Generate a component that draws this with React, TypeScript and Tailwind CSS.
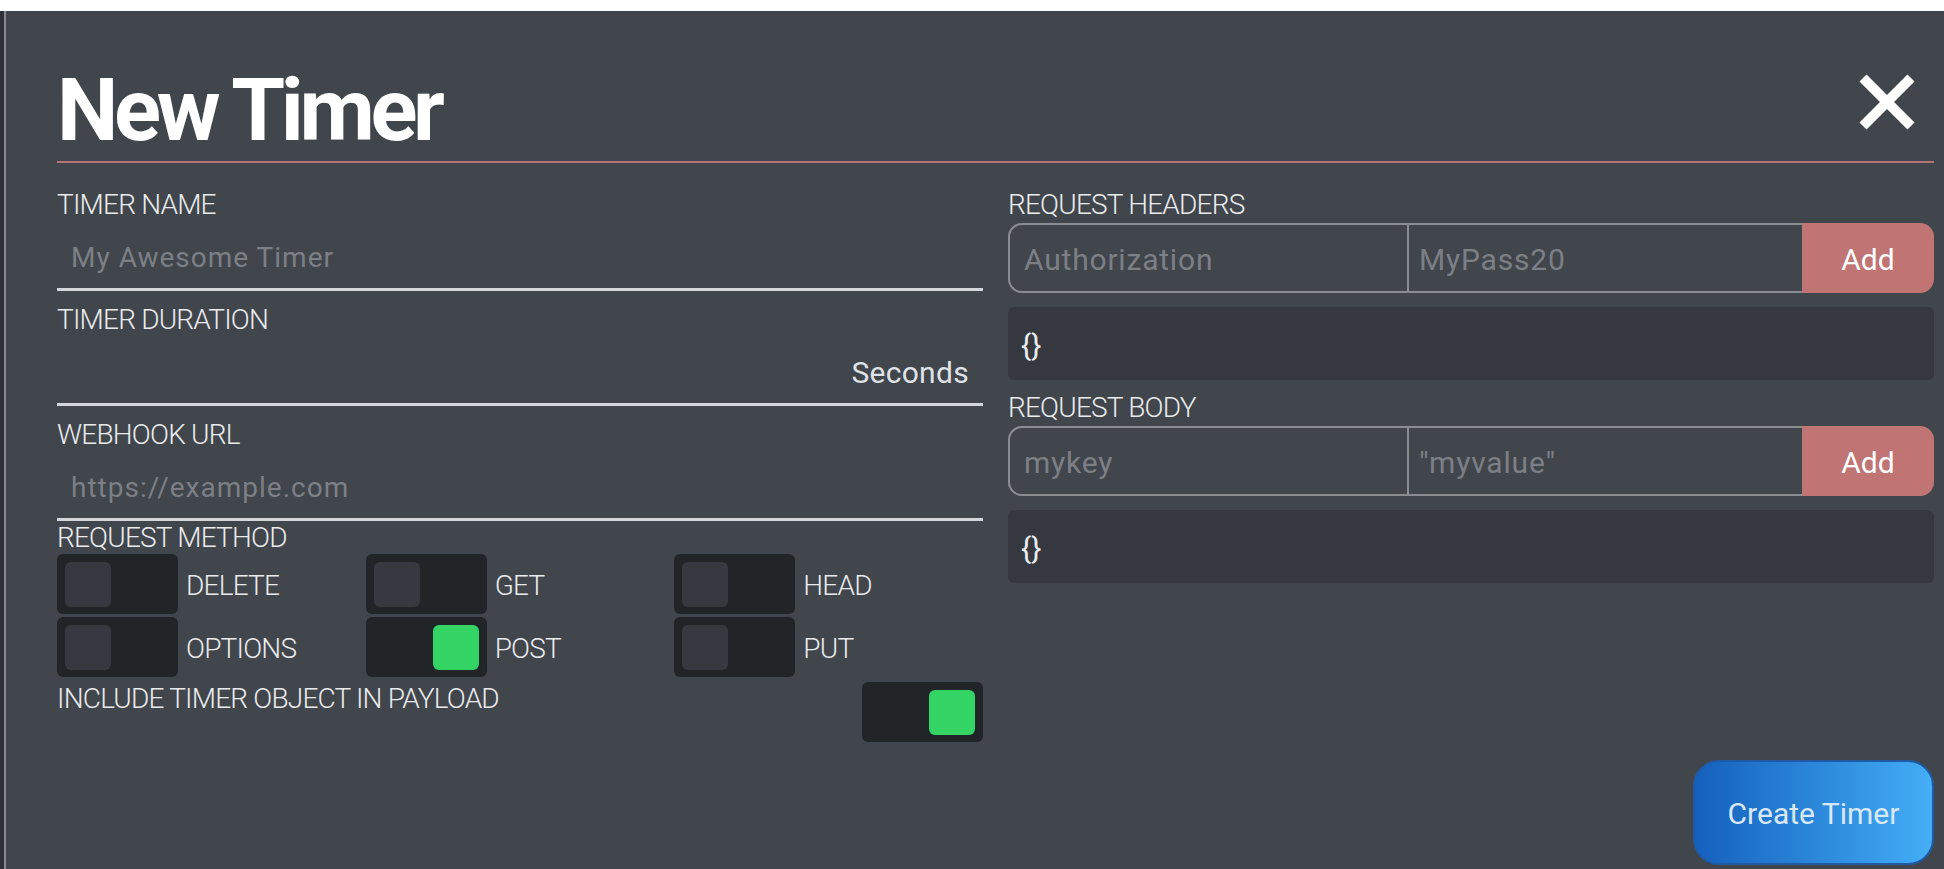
import React from "react";

const font = { fontFamily: "Roboto, 'Noto Sans', sans-serif" };

function Label({ children }: { children: React.ReactNode }) {
  return (
    <div className="text-[28px] leading-[32px] font-light tracking-[-0.8px] text-[#e9ebed] uppercase whitespace-nowrap">
      {children}
    </div>
  );
}

function LineInput({ placeholder, suffix }: { placeholder?: string; suffix?: string }) {
  return (
    <div className="flex items-center border-b-[3px] border-[#d3d6da] pt-[21px] pb-[14px] pl-[14px] pr-[14px]">
      <input
        placeholder={placeholder}
        className="flex-1 min-w-0 h-[32px] bg-transparent outline-none text-[28px] leading-[32px] text-white placeholder:text-[#7c8086] tracking-[1px]"
        style={font}
      />
      {suffix && <span className="text-[30px] leading-[32px] text-[#dfe2e6] tracking-[0.3px]">{suffix}</span>}
    </div>
  );
}

function Toggle({ on }: { on?: boolean }) {
  return (
    <div className={`w-[121px] h-[60px] rounded-[6px] bg-[#222528] flex items-center px-[8px] shrink-0 ${on ? "justify-end" : "justify-start"}`}>
      <div className={`w-[46px] h-[45px] rounded-[6px] ${on ? "bg-[#33d463]" : "bg-[#363a40]"}`} />
    </div>
  );
}

function Method({ name, on }: { name: string; on?: boolean }) {
  return (
    <div className="flex items-center gap-[8px]">
      <Toggle on={on} />
      <span className="text-[28px] leading-[32px] font-light tracking-[-0.8px] text-[#e9ebed] mt-[4px]">{name}</span>
    </div>
  );
}

function GroupInput({ k, v }: { k: string; v: string }) {
  return (
    <div className="flex h-[70px] mt-[2px]">
      <input
        placeholder={k}
        className="flex-1 min-w-0 bg-transparent outline-none border-y-2 border-l-2 border-[#8a8d92] rounded-l-[14px] pl-[14px] pt-[3px] text-[30px] tracking-[0.8px] text-white placeholder:text-[#7c8086]"
        style={font}
      />
      <input
        placeholder={v}
        className="flex-1 min-w-0 bg-transparent outline-none border-y-2 border-l-2 border-[#8a8d92] pl-[10px] pt-[3px] text-[30px] tracking-[0.8px] text-white placeholder:text-[#7c8086]"
        style={font}
      />
      <button className="w-[132px] shrink-0 bg-[#c07574] rounded-r-[14px] text-white text-[30px] pt-[3px]" style={font}>
        Add
      </button>
    </div>
  );
}

function JsonBox() {
  return (
    <div className="mt-[14px] h-[73px] rounded-[6px] bg-[#35383e] flex items-center pl-[13px] pt-[4px] text-[30px] text-[#e9ebee]">
      {"{}"}
    </div>
  );
}

export default function App() {
  return (
    <div className="w-[1944px] h-[869px] overflow-hidden bg-white pt-[11px]" style={font}>
      <div className="flex h-[858px]">
        <div className="w-[4px] bg-[#2d3034]" />
        <div className="w-[2px] bg-[#858990]" />
        <div className="flex-1 bg-[#41454c] pl-[51px] pr-[10px] pt-[56px]">
          <div className="flex justify-between items-start border-b-2 border-[#b87578] pb-[7px]">
            <h1 className="text-[87px] leading-none font-bold tracking-[-0.05em] text-white">New Timer</h1>
            <svg width="56" height="56" viewBox="0 0 56 56" className="mt-[7px] mr-[19px]">
              <line x1="4" y1="4" x2="52" y2="52" stroke="white" strokeWidth="10" />
              <line x1="52" y1="4" x2="4" y2="52" stroke="white" strokeWidth="10" />
            </svg>
          </div>

          <div className="grid grid-cols-2 gap-x-[25px] pt-[26px]">
            <div className="flex flex-col">
              <Label>Timer Name</Label>
              <LineInput placeholder="My Awesome Timer" />
              <div className="mt-[13px]">
                <Label>Timer Duration</Label>
              </div>
              <LineInput suffix="Seconds" />
              <div className="mt-[13px]">
                <Label>Webhook URL</Label>
              </div>
              <LineInput placeholder="https://example.com" />
              <div className="mt-[1px]">
                <Label>Request Method</Label>
              </div>
              <div className="grid grid-cols-3 gap-y-[3px]">
                <Method name="DELETE" />
                <Method name="GET" />
                <Method name="HEAD" />
                <Method name="OPTIONS" />
                <Method name="POST" on />
                <Method name="PUT" />
              </div>
              <div className="flex justify-between items-start mt-[5px]">
                <div className="mt-[1px]">
                  <Label>Include Timer Object in Payload</Label>
                </div>
                <Toggle on />
              </div>
            </div>

            <div className="flex flex-col">
              <Label>Request Headers</Label>
              <GroupInput k="Authorization" v="MyPass20" />
              <JsonBox />
              <div className="mt-[12px]">
                <Label>Request Body</Label>
              </div>
              <GroupInput k="mykey" v={'"myvalue"'} />
              <JsonBox />
            </div>
          </div>

          <div className="flex justify-end mt-[18px]">
            <button
              className="w-[241px] h-[105px] rounded-[26px] border-2 border-[#1f5aa6] bg-gradient-to-r from-[#1560bd] to-[#44aef6] text-[30px] text-[#d9e8f6] pt-[2px]"
              style={font}
            >
              Create Timer
            </button>
          </div>
        </div>
      </div>
    </div>
  );
}
